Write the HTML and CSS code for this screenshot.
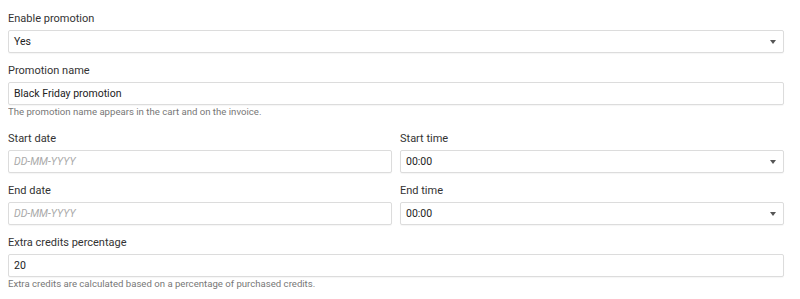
FILE: index.html
```html
<!DOCTYPE html>
<html lang="en">
<head>
  <meta charset="UTF-8" />
  <meta name="viewport" content="width=device-width, initial-scale=1.0"/>
  <title>Promotion settings</title>
  <link rel="stylesheet" href="styles.css">
</head>
<body>
  <form class="promo-form">
    <div class="field">
      <label>Enable promotion</label>
      <div class="select">Yes<span class="caret"></span></div>
    </div>

    <div class="field">
      <label>Promotion name</label>
      <div class="input">Black Friday promotion</div>
      <p class="help">The promotion name appears in the cart and on the invoice.</p>
    </div>

    <div class="row">
      <div class="field">
        <label>Start date</label>
        <div class="input placeholder">DD-MM-YYYY</div>
      </div>
      <div class="field">
        <label>Start time</label>
        <div class="select">00:00<span class="caret"></span></div>
      </div>
    </div>

    <div class="row">
      <div class="field">
        <label>End date</label>
        <div class="input placeholder">DD-MM-YYYY</div>
      </div>
      <div class="field">
        <label>End time</label>
        <div class="select">00:00<span class="caret"></span></div>
      </div>
    </div>

    <div class="field">
      <label>Extra credits percentage</label>
      <div class="input">20</div>
      <p class="help">Extra credits are calculated based on a percentage of purchased credits.</p>
    </div>
  </form>
</body>
</html>
```

FILE: styles.css
```css
body {
  font-family: Roboto, 'Liberation Sans', sans-serif;
  background-color: #fff;
  color: #333;
  margin: 8px;
}

.promo-form {
  width: 776px;
  padding-top: 4px;
}

.row {
  display: grid;
  grid-template-columns: 1fr 1fr;
  gap: 8px;
}

.field {
  margin-bottom: 11px;
}

.field label {
  display: block;
  font-size: 11px;
  line-height: 14px;
  margin-bottom: 4px;
  color: #333;
}

.input,
.select {
  position: relative;
  box-sizing: border-box;
  height: 23px;
  padding: 0 5px;
  border: 1px solid #dcdcdc;
  border-radius: 2px;
  box-shadow: 0 1px 1px rgba(0,0,0,0.04);
  font-size: 10.5px;
  line-height: 21px;
  color: #222;
  background: white;
}

.placeholder {
  color: #aaa;
  font-style: italic;
}

.caret {
  position: absolute;
  right: 7px;
  top: 9px;
  border-left: 3px solid transparent;
  border-right: 3px solid transparent;
  border-top: 4px solid #555;
}

.help {
  margin: 0;
  padding-bottom: 2px;
  font-size: 9.6px;
  line-height: 14px;
  color: #777;
}
```
